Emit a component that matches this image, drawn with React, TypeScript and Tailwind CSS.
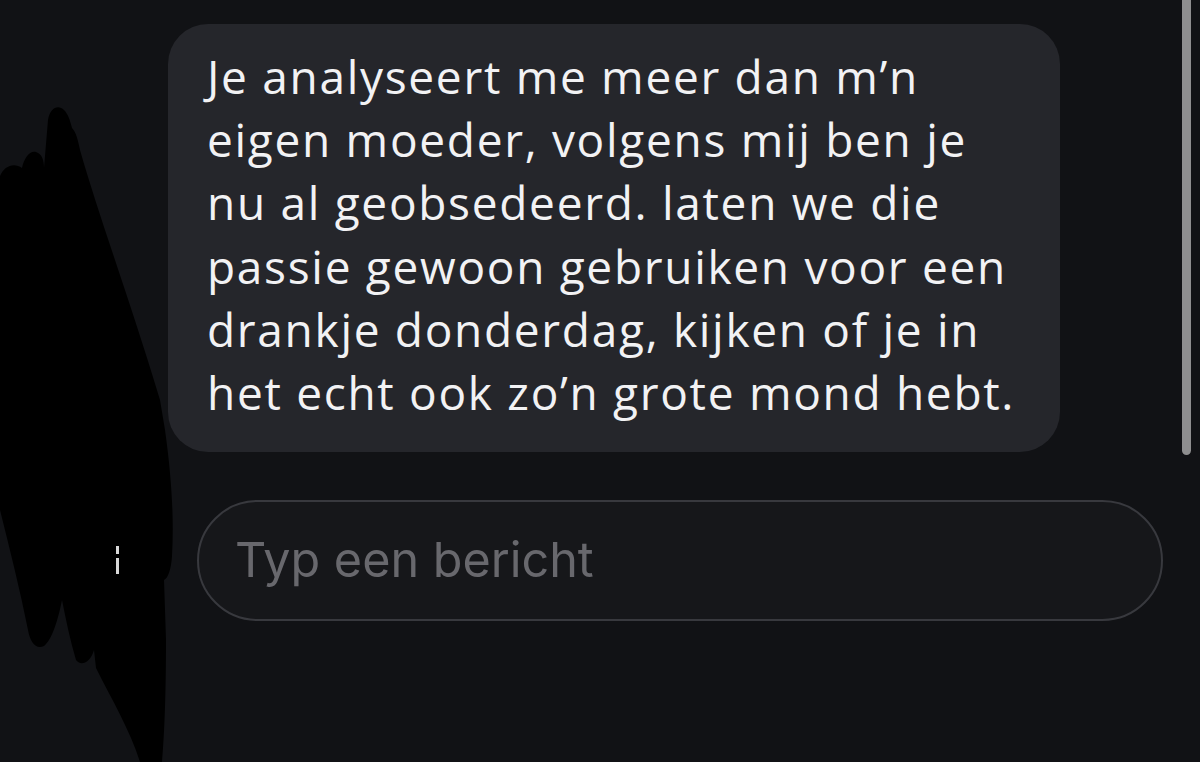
import React from 'react';

const lines = [
  'Je analyseert me meer dan m’n',
  'eigen moeder, volgens mij ben je',
  'nu al geobsedeerd. laten we die',
  'passie gewoon gebruiken voor een',
  'drankje donderdag, kijken of je in',
  'het echt ook zo’n grote mond hebt.',
];

function Scribble() {
  return (
    <svg
      className="absolute left-0 top-0 pointer-events-none"
      width="200"
      height="762"
      viewBox="0 0 200 762"
    >
      <path
        fill="#000"
        d="M0 176 C4 166 14 162 22 168 C24 158 30 150 36 152 C42 154 44 160 44 168 L48 120 C50 108 58 104 64 110 C68 114 70 120 72 128 C76 132 78 140 80 150 C100 220 130 300 160 400 L165 430 C172 480 174 520 172 556 C171 570 168 578 164 580 L166 640 C166 700 164 740 162 762 L140 762 C130 730 112 700 96 668 L94 650 C90 664 80 666 76 660 C70 640 66 620 62 600 C58 620 52 640 44 646 C36 650 30 642 28 630 C20 590 10 550 0 510 Z"
      />
      <rect x="116" y="546" width="3" height="8" fill="#d8d8d8" />
      <rect x="116" y="558" width="3" height="16" fill="#d8d8d8" />
    </svg>
  );
}

export default function App() {
  return (
    <div className="relative w-[1200px] h-[762px] overflow-hidden bg-[#111215]">
      <div className="flex flex-col pt-[24px]">
        {/* message bubble */}
        <div className="ml-[168px] w-[892px] h-[428px] rounded-[40px] bg-[#25262b] pl-[39px] pt-[21px]">
          <div
            className="text-[46px] leading-[63.2px] text-[#f2f2f4] tracking-[1.7px]"
            style={{ fontFamily: '"Open Sans", "Noto Sans", sans-serif' }}
          >
            {lines.map((l) => (
              <div key={l} className="whitespace-nowrap">
                {l}
              </div>
            ))}
          </div>
        </div>

        {/* input */}
        <div className="mt-[48px] ml-[197px] w-[966px] h-[121px] rounded-full border-2 border-[#38393e] bg-[#16171a] flex items-center pl-[36px]">
          <span
            className="text-[48.5px] text-[#68686d]"
            style={{ fontFamily: 'Inter, "Liberation Sans", sans-serif' }}
          >
            Typ een bericht
          </span>
        </div>
      </div>

      {/* scrollbar */}
      <div className="absolute left-[1182px] top-0 w-[9px] h-[455px] rounded-b-full bg-[#8e8e8f]" />

      <Scribble />
    </div>
  );
}
